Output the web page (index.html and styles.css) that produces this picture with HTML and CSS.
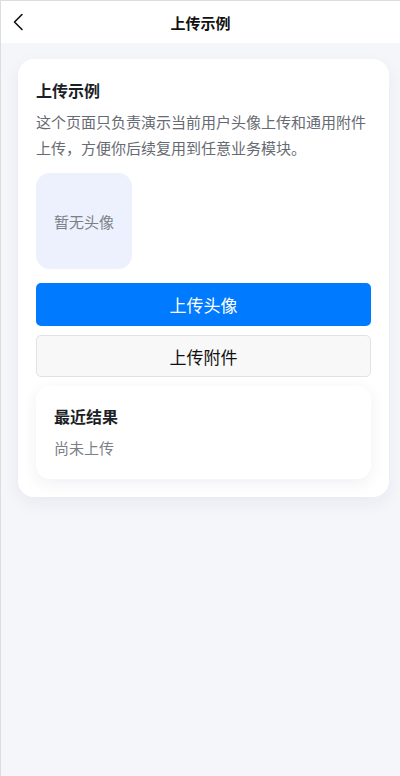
FILE: index.html
```html
<!DOCTYPE html>
<html lang="zh">
<head>
<meta charset="utf-8">
<link rel="stylesheet" href="styles.css">
</head>
<body>
<div class="screen">
  <header class="nav">
    <span class="back">
      <svg width="12" height="18" viewBox="0 0 12 18"><path d="M10 1.5 L2.5 9 L10 16.5" fill="none" stroke="#111" stroke-width="1.6" stroke-linecap="round" stroke-linejoin="round"/></svg>
    </span>
    <h1 class="nav-title">上传示例</h1>
  </header>
  <main class="content">
    <section class="card">
      <h2 class="card-title">上传示例</h2>
      <p class="desc">这个页面只负责演示当前用户头像上传和通用附件上传，方便你后续复用到任意业务模块。</p>
      <div class="avatar">暂无头像</div>
      <button class="btn btn-primary">上传头像</button>
      <button class="btn btn-default">上传附件</button>
      <div class="result">
        <h3 class="result-title">最近结果</h3>
        <p class="result-text">尚未上传</p>
      </div>
    </section>
  </main>
</div>
</body>
</html>
```
FILE: styles.css
```css
* { box-sizing: border-box; margin: 0; padding: 0; }
html, body { height: 100%; }
body {
  font-family: "Noto Sans CJK SC", "Liberation Sans", sans-serif;
  background: #f5f6fa;
}
.screen {
  min-height: 776px;
  border-left: 1px solid #dcdde2;
  border-top: 1px solid #dcdde2;
  background: #f5f6fa;
}
.nav {
  height: 42px;
  background: #fff;
  display: flex;
  align-items: center;
  justify-content: center;
  position: relative;
}
.back {
  position: absolute;
  left: 11px;
  top: 12px;
  display: flex;
}
.nav-title {
  font-size: 15px;
  font-weight: 700;
  color: #111;
  line-height: 1;
}
.content {
  padding: 16px 11px 0 17px;
}
.card {
  background: #fff;
  border-radius: 16px;
  padding: 18px;
  box-shadow: 0 6px 18px rgba(30, 40, 80, 0.06);
}
.card-title {
  font-size: 16px;
  font-weight: 700;
  color: #1c1f26;
  line-height: 26px;
}
.desc {
  font-size: 15px;
  color: #666a72;
  line-height: 26px;
  margin-top: 6px;
}
.avatar {
  width: 96px;
  height: 96px;
  border-radius: 14px;
  background: #edf1fd;
  color: #7b7f88;
  font-size: 15px;
  display: flex;
  align-items: center;
  justify-content: center;
  margin-top: 12px;
}
.btn {
  display: block;
  width: 100%;
  height: 43px;
  border-radius: 5px;
  font-family: inherit;
  font-size: 17px;
  cursor: pointer;
}
.btn-primary {
  margin-top: 14px;
  background: #007aff;
  color: #fff;
  border: none;
}
.btn-default {
  margin-top: 9px;
  height: 42px;
  background: #f8f8f8;
  color: #111;
  border: 1px solid #e2e2e2;
}
.result {
  margin-top: 9px;
  background: #fff;
  border-radius: 14px;
  padding: 17px 18px 18px;
  box-shadow: 0 4px 16px rgba(30, 40, 80, 0.07);
}
.result-title {
  font-size: 16px;
  font-weight: 700;
  color: #1c1f26;
  line-height: 26px;
}
.result-text {
  font-size: 15px;
  color: #7b7f88;
  line-height: 26px;
  margin-top: 6px;
}
```
